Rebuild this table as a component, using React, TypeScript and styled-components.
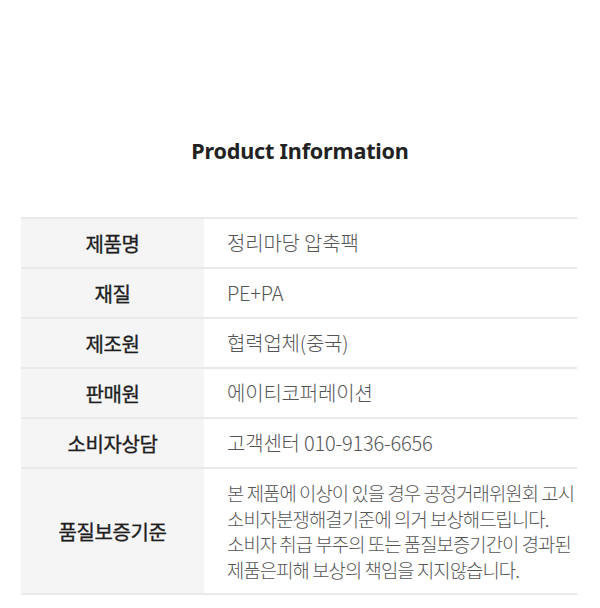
import React from "react";
import styled, { createGlobalStyle } from "styled-components";

const GlobalStyle = createGlobalStyle`
  html, body {
    margin: 0;
    padding: 0;
    background: #fff;
  }
  body {
    font-family: "Noto Sans CJK KR", "Noto Sans", sans-serif;
  }
`;

const Page = styled.main`
  width: 600px;
  padding-top: 137px;
  box-sizing: border-box;
`;

const Title = styled.h2`
  margin: 0 0 52px;
  text-align: center;
  font-family: "Noto Sans", "Open Sans", sans-serif;
  font-size: 21.6px;
  line-height: 28px;
  font-weight: 700;
  color: #222;
  letter-spacing: -0.2px;
`;

const Table = styled.section`
  margin: 0 23px 0 21px;
  border-bottom: 2px solid #e9e9e9;
`;

const Row = styled.div<{ $tall?: boolean }>`
  display: grid;
  grid-template-columns: 183px 1fr;
  border-top: 2px solid #e9e9e9;
  min-height: ${p => (p.$tall ? "123px" : "48px")};
`;

const Label = styled.div`
  display: flex;
  align-items: center;
  justify-content: center;
  background: #f5f5f5;
  font-size: 20px;
  font-weight: 400;
  color: #1e1e1e;
  letter-spacing: -0.4px;
  -webkit-text-stroke: 0.35px #1e1e1e;
`;

const Value = styled.div`
  display: flex;
  align-items: center;
  padding-left: 23px;
  font-size: 20px;
  line-height: 24px;
  letter-spacing: -0.2px;
  font-weight: 300;
  color: #555;
`;

const Notice = styled.p`
  margin: 0;
  padding: 11px 0 11px 23px;
  align-self: center;
  white-space: nowrap;
  font-size: 18.8px;
  line-height: 25.5px;
  letter-spacing: -0.9px;
  font-weight: 300;
  color: #555;
`;

const rows = [
  { label: "제품명", value: "정리마당 압축팩" },
  { label: "재질", value: "PE+PA" },
  { label: "제조원", value: "협력업체(중국)" },
  { label: "판매원", value: "에이티코퍼레이션" },
  { label: "소비자상담", value: "고객센터 010-9136-6656" },
];

export default function App() {
  return (
    <>
      <GlobalStyle />
      <Page>
        <Title>Product Information</Title>
        <Table>
          {rows.map(r => (
            <Row key={r.label}>
              <Label>{r.label}</Label>
              <Value>{r.value}</Value>
            </Row>
          ))}
          <Row $tall>
            <Label>품질보증기준</Label>
            <Notice>
              본 제품에 이상이 있을 경우 공정거래위원회 고시
              <br />
              소비자분쟁해결기준에 의거 보상해드립니다.
              <br />
              소비자 취급 부주의 또는 품질보증기간이 경과된
              <br />
              제품은피해 보상의 책임을 지지않습니다.
            </Notice>
          </Row>
        </Table>
      </Page>
    </>
  );
}
